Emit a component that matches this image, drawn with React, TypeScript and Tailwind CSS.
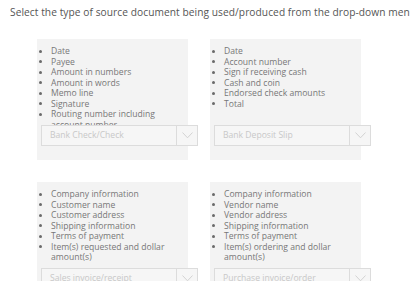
import React from "react";

const cards: { items: string[]; label: string }[] = [
  {
    items: [
      "Date",
      "Payee",
      "Amount in numbers",
      "Amount in words",
      "Memo line",
      "Signature",
      "Routing number including account number",
    ],
    label: "Bank Check/Check",
  },
  {
    items: [
      "Date",
      "Account number",
      "Sign if receiving cash",
      "Cash and coin",
      "Endorsed check amounts",
      "Total",
    ],
    label: "Bank Deposit Slip",
  },
  {
    items: [
      "Company information",
      "Customer name",
      "Customer address",
      "Shipping information",
      "Terms of payment",
      "Item(s) requested and dollar amount(s)",
    ],
    label: "Sales invoice/receipt",
  },
  {
    items: [
      "Company information",
      "Vendor name",
      "Vendor address",
      "Shipping information",
      "Terms of payment",
      "Item(s) ordering and dollar amount(s)",
    ],
    label: "Purchase invoice/order",
  },
];

function Card({ items, label }: { items: string[]; label: string }) {
  return (
    <div className="w-[151px] h-[121px] bg-[#f3f3f3] pt-[7px] flex flex-col">
      <div className="h-[79px] overflow-hidden">
        {items.map((t) => (
          <div key={t} className="flex items-start">
            <span className="w-[14px] shrink-0 flex justify-start pl-[2px] h-[10.5px] items-center">
              <span className="w-[3px] h-[3px] rounded-full bg-[#6a6a6a]"></span>
            </span>
            <span className="w-[118px] text-[8.6px] leading-[10.5px] text-[#777]">{t}</span>
          </div>
        ))}
      </div>
      <div className="ml-[4px] w-[157px] h-[21px] flex border border-[#dcdcdc] bg-[#f6f6f6]">
        <div className="flex-1 flex items-center pl-[8px] text-[8.6px] text-[#c8c8c8] overflow-hidden whitespace-nowrap">
          {label}
        </div>
        <div className="w-[21px] border-l border-[#dcdcdc] flex items-center justify-center">
          <svg width="11" height="7" viewBox="0 0 11 7" fill="none">
            <path d="M0.5 0.5 L5.5 5.8 L10.5 0.5" stroke="#cfcfcf" strokeWidth="0.9" />
          </svg>
        </div>
      </div>
    </div>
  );
}

export default function App() {
  return (
    <div
      className="w-[410px] h-[281px] bg-white overflow-hidden"
      style={{ fontFamily: '"Open Sans", "Liberation Sans", sans-serif' }}
    >
      <div className="pl-[10px] pt-[5px] text-[10.2px] tracking-[0.06px] leading-[15px] text-[#555] whitespace-nowrap">
        Select the type of source document being used/produced from the drop-down menu
      </div>
      <div className="mt-[19px] ml-[37px] grid grid-cols-[151px_151px] gap-x-[22px] gap-y-[22px]">
        {cards.map((c) => (
          <Card key={c.label} items={c.items} label={c.label} />
        ))}
      </div>
    </div>
  );
}
